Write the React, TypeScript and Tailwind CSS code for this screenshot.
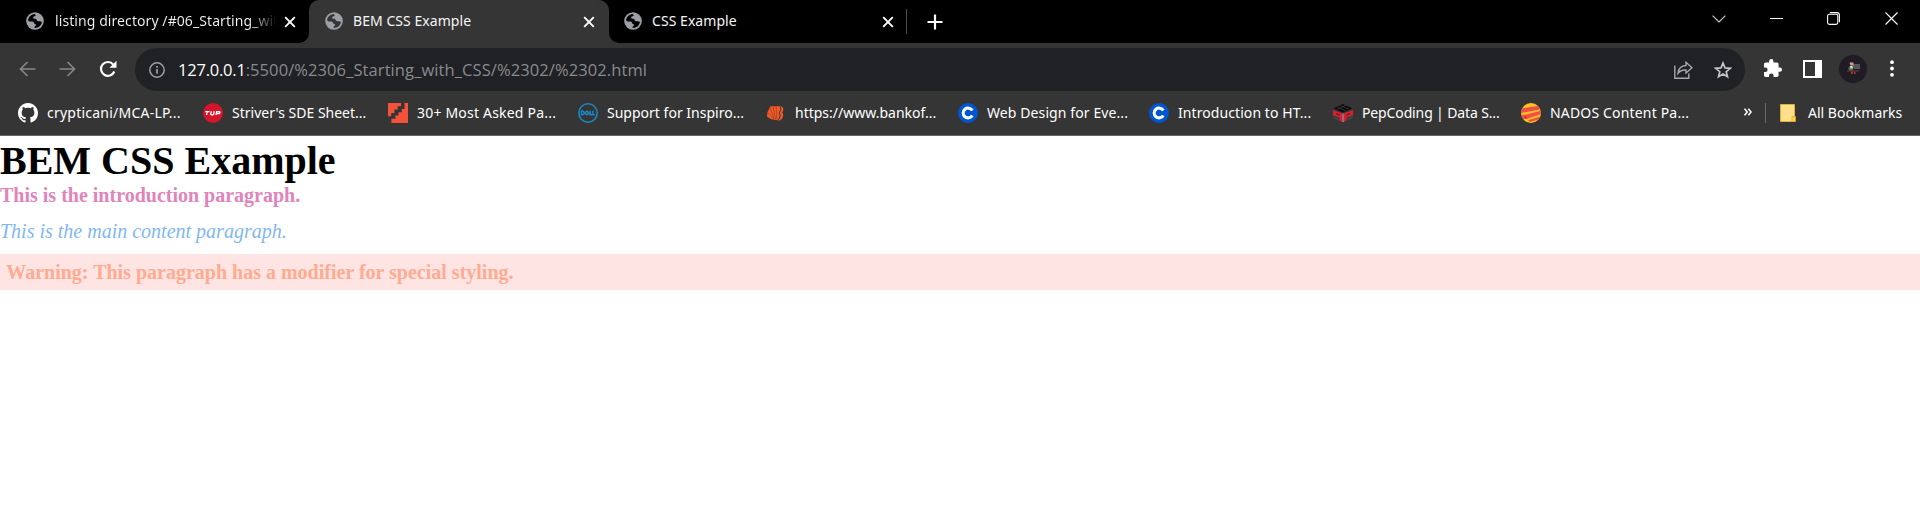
import React from "react";

const Globe = () => (
  <svg viewBox="0 0 18 18" className="size-[18px] shrink-0">
    <circle cx="9" cy="9" r="8.8" fill="#9aa0a6" />
    <path
      d="M8.2 2.1C5 2.6 2.6 4.9 2 8.2c.6.9 1.800 1.300 3.300 1.200 1.600-.1 2.700.4 2.900 1.600.2 1 .9 1.300 1.900 1.200v1.300c-1 .4-1.600 1.100-1.500 2.400 3.600.2 6.600-2.100 7.300-5.700-.6-1-1.500-1.200-2.700-1-1.200.2-2.300-.3-2.600-1.300-.3-.9-1-1.200-2.200-1.100-.9 0-1.300-.6-1.200-1.300.1-.8.7-1.200 1.500-1.200.7 0 1-.5.8-1.100-.2-.6-.6-1-1.300-1.100z"
      fill="currentColor"
    />
  </svg>
);

const Close = () => (
  <svg viewBox="0 0 12 12" className="size-3 shrink-0" stroke="#fff" strokeWidth="1.9">
    <path d="M1.200 1.200l9.600 9.600M10.800 1.200l-9.600 9.600" />
  </svg>
);

const Github = () => (
  <svg viewBox="0 0 16 16" className="size-5" fill="#fff">
    <path d="M8 0C3.580 0 0 3.580 0 8c0 3.540 2.290 6.530 5.470 7.590.4.070.550-.170.550-.380 0-.190-.010-.820-.010-1.490-2.010.370-2.530-.490-2.690-.940-.090-.230-.480-.940-.820-1.130-.280-.150-.680-.520-.010-.530.630-.010 1.080.580 1.230.820.720 1.210 1.870.870 2.330.660.070-.520.280-.870.510-1.070-1.780-.2-3.640-.890-3.640-3.950 0-.870.310-1.590.820-2.150-.080-.2-.360-1.020.080-2.120 0 0 .670-.210 2.200.820.640-.180 1.320-.270 2-.270s1.360.090 2 .270c1.530-1.040 2.200-.820 2.200-.820.440 1.100.160 1.920.080 2.120.510.560.820 1.270.820 2.150 0 3.070-1.870 3.750-3.650 3.950.290.250.540.730.540 1.480 0 1.070-.010 1.930-.010 2.200 0 .210.150.460.550.380A8.010 8.010 0 0 0 16 8c0-4.420-3.580-8-8-8z" />
  </svg>
);

const Tuf = () => (
  <svg viewBox="0 0 20 20" className="size-5">
    <circle cx="10" cy="10" r="10" fill="#d6152c" />
    <path d="M2.300 8.700h4.200M4.200 8.700l-.7 3.300M8.300 8.200l-.6 2.900q-.1.700.7.700h1.300q.8 0 1-.8l.5-2.800M13 12l.7-3.300h3.600M13.600 10.500h2.900l.6-1.600" fill="none" stroke="#fff" strokeWidth="1.300" />
  </svg>
);

const Steps = () => (
  <svg viewBox="0 0 20 20" className="size-5" fill="#f4523b">
    <path d="M0 0h13v3.300H9.700v3.300H6.400V10H3.200v3.200H0z" />
    <path d="M20 0V20H3.400v-4.200h4V12.500H10.500V9.200h3.300V5.900h2.700V0z" />
  </svg>
);

const Dell = () => (
  <svg viewBox="0 0 20 20" className="size-5" fill="none" stroke="#1a87c4">
    <circle cx="10" cy="10" r="9.200" strokeWidth="1.600" />
    <path d="M3.400 8.100v3.700h1.100q1.700-.2 1.700-1.800T4.500 8.100zM8.900 8l-2 1.900 2 1.800 2.200-1.800zM12.100 7.800v3.900h1.900M14.900 7.800v3.900h1.900" strokeWidth="1.500" />
  </svg>
);

const Baroda = () => (
  <svg viewBox="0 0 20 20" className="size-5">
    <path d="M4.500 3.200h10.300q3.200.8 2.400 4.200l-1 2.100q1.600 1.600.7 4.200-1 3.400-4.300 3.800L5.600 16.300 1 13.800 1.500 9z" fill="#f15a29" />
    <path d="M4.300 5l4 11.500M7 3.800l2.700 12.500M10.200 3.500l.7 13M1.800 9.500L8 16" stroke="#9c3f21" strokeWidth=".7" />
    <path d="M14.500 3.500q1.500 3-1.200 6 2.300 3-.8 7.500" fill="none" stroke="#353535" strokeWidth="1" />
  </svg>
);

const Coursera = () => (
  <svg viewBox="0 0 20 20" className="size-5">
    <circle cx="10" cy="10" r="10" fill="#0056d2" />
    <path d="M14.300 7.600A4.900 4.900 0 1 0 14.300 12.400" fill="none" stroke="#fff" strokeWidth="3" />
  </svg>
);

const Pep = () => (
  <svg viewBox="0 0 20 20" className="size-5">
    <path d="M10 1l9.500 4.500L10 9.500.5 5.500z" fill="#0c0c0f" />
    <path d="M5 4.500l8 3.500M8 2.800l8 3.500M4 6.200l9-4" stroke="#35353a" strokeWidth=".9" />
    <path d="M0 7l9.500 3.500V19l-3-1.500v-2.700L0 12.500zM20 7l-9.500 3.500V19l3-1.500v-2.700l6.500-2.300z" fill="#d81f30" />
    <path d="M3 10l3.500 1.200v1.200L3 11.200zM17 10l-3.500 1.200v1.200l3.500-1.200z" fill="#43262a" />
    <path d="M.3 13.500l5.200 2v1.800L.3 15zM19.700 13.500l-5.200 2v1.800l5.200-2.300z" fill="#2c5a49" />
    <path d="M10 10.500V19" stroke="#b9a7aa" strokeWidth="1" />
  </svg>
);

const Nados = () => (
  <svg viewBox="0 0 20 20" className="size-5">
    <defs>
      <clipPath id="nados-disc">
        <circle cx="10" cy="10" r="10" />
      </clipPath>
    </defs>
    <g clipPath="url(#nados-disc)">
      <path d="M0 0h20v20H0z" fill="#fcc419" />
      <path d="M0 5.500L18 2.800l2 3.500L0 10zM0 11.800h4.500l15.500-4v3.300L5 16.200 1 15.500zM7 17.200l13-4v2.600L9 19z" fill="#f14d4d" />
      <path d="M3.500 12.700l2.200 1.500-1.800 1.500z" fill="#b62d3a" />
    </g>
  </svg>
);

function Tab({ title, dark, className }: { title: string; dark?: boolean; className: string }) {
  return (
    <div className={`flex shrink-0 items-center pb-px ${className} ${dark ? "text-black" : "text-[#353535]"}`}>
      <Globe />
      <span className="ml-[10px] w-[222px] overflow-hidden whitespace-nowrap text-[14px] leading-5 tracking-[0.05px] text-[#f5f5f5]">
        {title}
      </span>
    </div>
  );
}

const bookmarks = [
  { icon: <Github />, text: "crypticani/MCA-LP...", size: "w-[185px] tracking-[0.230px]" },
  { icon: <Tuf />, text: "Striver's SDE Sheet...", size: "w-[185px] tracking-[0px]" },
  { icon: <Steps />, text: "30+ Most Asked Pa...", size: "w-[190px] tracking-[0.200px]" },
  { icon: <Dell />, text: "Support for Inspiro...", size: "w-[188px] tracking-[0.010px]" },
  { icon: <Baroda />, text: "https://www.bankof...", size: "w-[192px] tracking-[0px]" },
  { icon: <Coursera />, text: "Web Design for Eve...", size: "w-[191px] tracking-[0.100px]" },
  { icon: <Coursera />, text: "Introduction to HT...", size: "w-[184px] tracking-[0.080px]" },
  { icon: <Pep />, text: "PepCoding | Data S...", size: "w-[188px] tracking-[-0.130px]" },
  { icon: <Nados />, text: "NADOS Content Pa...", size: "w-[210px] tracking-[0.170px]" },
];

function TabStrip() {
  return (
    <div className="flex h-[43px] bg-[#353535]">
      <div className="flex w-[309px] shrink-0 items-center rounded-br-[10px] bg-black pl-[26px]">
        <div className="flex items-center pb-px text-black">
          <Globe />
          <span className="ml-[11px] w-[220px] overflow-hidden whitespace-nowrap bg-linear-to-r from-[#f5f5f5] from-88% to-[#f5f5f5]/10 bg-clip-text text-[14px] leading-5 tracking-[0.080px] text-transparent">
            listing directory /#06_Starting_with
          </span>
        </div>
        <div className="ml-[9px]">
          <Close />
        </div>
      </div>
      <div className="w-[300px] shrink-0 bg-black">
        <div className="flex h-full items-center rounded-t-[10px] bg-[#353535] pl-4">
          <Tab title="BEM CSS Example" className="w-[258px]" />
          <Close />
        </div>
      </div>
      <div className="flex grow items-center rounded-bl-[10px] bg-black pl-[15px]">
        <Tab title="CSS Example" dark className="w-[258px]" />
        <Close />
        <div className="ml-3 h-[25px] w-px bg-[#4d4d4d]" />
        <svg viewBox="0 0 16 16" className="ml-5 size-4" stroke="#fff" strokeWidth="2.200">
          <path d="M8 .5v15M.5 8h15" />
        </svg>
        <div className="mb-[6px] ml-auto flex items-center pr-[22px]">
          <svg viewBox="0 0 14 8" className="mr-[44px] h-2 w-[14px]" fill="none" stroke="#d0d0d0" strokeWidth="1.100">
            <path d="M.6.6L7 7 13.400.6" />
          </svg>
          <div className="mr-11 h-px w-[13px] bg-white" />
          <svg viewBox="0 0 13 13" className="mr-[45px] size-[13px]" fill="none" stroke="#fff" strokeWidth="1.100">
            <rect x=".6" y="2.200" width="10.200" height="10.200" rx="1.800" />
            <path d="M2.800.6h7q2.600 0 2.600 2.600v7" />
          </svg>
          <svg viewBox="0 0 13 13" className="size-[13px]" fill="none" stroke="#fff" strokeWidth="1.100">
            <path d="M.5.5l12 12M12.500.5l-12 12" />
          </svg>
        </div>
      </div>
    </div>
  );
}

function Toolbar() {
  return (
    <div className="flex h-12 items-start bg-[#353535] pt-[5px]">
      <div className="flex h-[43px] w-[135px] shrink-0 items-center pb-px pl-[19px]">
        <svg viewBox="0 0 17 16" className="h-4 w-[17px]" fill="none" stroke="#868686" strokeWidth="1.700">
          <path d="M16.500 8H1.500M8.500 1L1.500 8l7 7" />
        </svg>
        <svg viewBox="0 0 17 16" className="ml-[23px] h-4 w-[17px]" fill="none" stroke="#868686" strokeWidth="1.700">
          <path d="M.5 8h15M8.500 1l7 7-7 7" />
        </svg>
        <svg viewBox="0 0 18 18" className="ml-[23px] size-[18px]">
          <path d="M15.300 11.500A6.900 6.900 0 1 1 14.300 4.600" fill="none" stroke="#fff" strokeWidth="2.200" />
          <path d="M17.500.8v7h-7z" fill="#fff" />
        </svg>
      </div>
      <div className="flex h-[43px] w-[1610px] shrink-0 items-center rounded-full bg-[#202124] pl-[14px]">
        <svg viewBox="0 0 16 16" className="size-4" fill="none" stroke="#9aa0a6" strokeWidth="1.500">
          <circle cx="8" cy="8" r="7.200" />
          <path d="M8 7v4.700M8 4v1.800" strokeWidth="1.700" />
        </svg>
        <div className="ml-[13px] whitespace-nowrap font-['Open_Sans'] text-[16.5px] leading-6">
          <span className="tracking-[-0.220px] text-white">127.0.0.1</span>
          <span className="tracking-[0.090px] text-[#888b8f]">:5500/%2306_Starting_with_CSS/%2302/%2302.html</span>
        </div>
        <svg viewBox="0 0 19 18" className="ml-auto h-[18px] w-[19px]" fill="none" stroke="#a8a8a8" strokeWidth="1.400">
          <path d="M.8 4.500v12.800h14V12.500" />
          <path d="M12 1.300l6 5.400-6 5.300V9q-5.500-.3-8 3.300.6-7.300 8-7.800z" />
        </svg>
        <svg viewBox="0 0 18 18" className="ml-[21px] mr-[13px] size-[18px]" fill="none" stroke="#c4c4c4" strokeWidth="1.700">
          <path d="M9 2l2 4.900 5.300.4-4.100 3.400 1.300 5.100L9 13.100l-4.500 2.700 1.300-5.100L1.700 7.300 7 6.900z" />
        </svg>
      </div>
      <div className="flex h-[43px] items-center pl-[19px]">
        <svg viewBox="2 1 21 21" className="mb-[3px] size-[18px]" fill="#fff">
          <path d="M20.500 11H19V7c0-1.100-.9-2-2-2h-4V3.500a2.500 2.500 0 0 0-5 0V5H4c-1.100 0-2 .9-2 2v3.800h1.500a2.700 2.700 0 0 1 0 5.400H2V20c0 1.100.9 2 2 2h3.800v-1.500a2.700 2.700 0 0 1 5.400 0V22H17c1.100 0 2-.9 2-2v-4h1.500a2.500 2.500 0 0 0 0-5z" />
        </svg>
        <div className="mb-[2px] ml-[21px] h-[18px] w-[19px] border-y-[2.500px] border-l-[2.500px] border-r-[7px] border-white" />
        <svg viewBox="0 0 28 28" className="mb-[2px] ml-[17px] size-7">
          <circle cx="14" cy="14" r="14" fill="#211b26" />
          <path d="M13.500 9H21v5h-6z" fill="#55585b" />
          <path d="M10.500 7.500h4v3h-3z" fill="#cfa28d" />
          <path d="M9 12.500l5 .5v2.500h-4z" fill="#477d60" />
          <path d="M8 15.500h13l-1 1H8z" fill="#7a3828" />
          <path d="M12 16.500h2v2.500h-2zM15 16.500h1.500v2.500H15z" fill="#a43a2f" />
          <path d="M10.500 11h3l1 2-3 .5z" fill="#d8d2c5" />
        </svg>
        <svg viewBox="0 0 4 17" className="mb-[2px] ml-[23px] h-[17px] w-1" fill="#fff">
          <circle cx="2" cy="2.200" r="1.900" />
          <circle cx="2" cy="8.500" r="1.900" />
          <circle cx="2" cy="14.800" r="1.900" />
        </svg>
      </div>
    </div>
  );
}

function BookmarkBar() {
  return (
    <div className="flex h-[45px] items-center border-b border-[#6a6666] bg-[#353535] pl-[18px] text-[14px] leading-5 text-white">
      {bookmarks.map((b) => (
        <div key={b.text} className={`flex shrink-0 items-center whitespace-nowrap ${b.size}`}>
          {b.icon}
          <span className="ml-[9px]">{b.text}</span>
        </div>
      ))}
      <svg viewBox="0 0 8 8" className="mb-[2px] ml-[13px] size-2" fill="none" stroke="#fff" strokeWidth="1.500">
        <path d="M.5.7L3.300 4 .5 7.300M4.300.7L7.100 4 4.300 7.300" />
      </svg>
      <div className="ml-[13px] h-5 w-px bg-[#6a6a6a]" />
      <svg viewBox="0 0 16 18" className="ml-[14px] h-[18px] w-4">
        <path d="M.5.5h14V17.500H.5z" fill="#ffe08a" stroke="#e0b03c" />
        <path d="M12 12.500h3.500v5H12z" fill="#ffd54f" stroke="#e0a92e" strokeWidth=".8" />
      </svg>
      <span className="ml-[12px] whitespace-nowrap">All Bookmarks</span>
    </div>
  );
}

export default function App() {
  return (
    <div className="flex h-[531px] w-[1920px] flex-col overflow-hidden bg-white font-['Noto_Sans',sans-serif]">
      <TabStrip />
      <Toolbar />
      <BookmarkBar />
      <main className="pt-px font-['Liberation_Serif',serif] text-[20px] leading-[23px]">
        <h1 className="text-[40px] font-bold leading-[47px] text-black">BEM CSS Example</h1>
        <p className="mb-[13px] font-bold text-[#e084bb]">This is the introduction paragraph.</p>
        <p className="mb-[11px] italic text-[#7fb8f0]">This is the main content paragraph.</p>
        <p className="bg-[#ffe4e4] px-[6.25px] py-[6.5px] font-bold text-[#ffab91]">
          Warning: This paragraph has a modifier for special styling.
        </p>
      </main>
    </div>
  );
}
